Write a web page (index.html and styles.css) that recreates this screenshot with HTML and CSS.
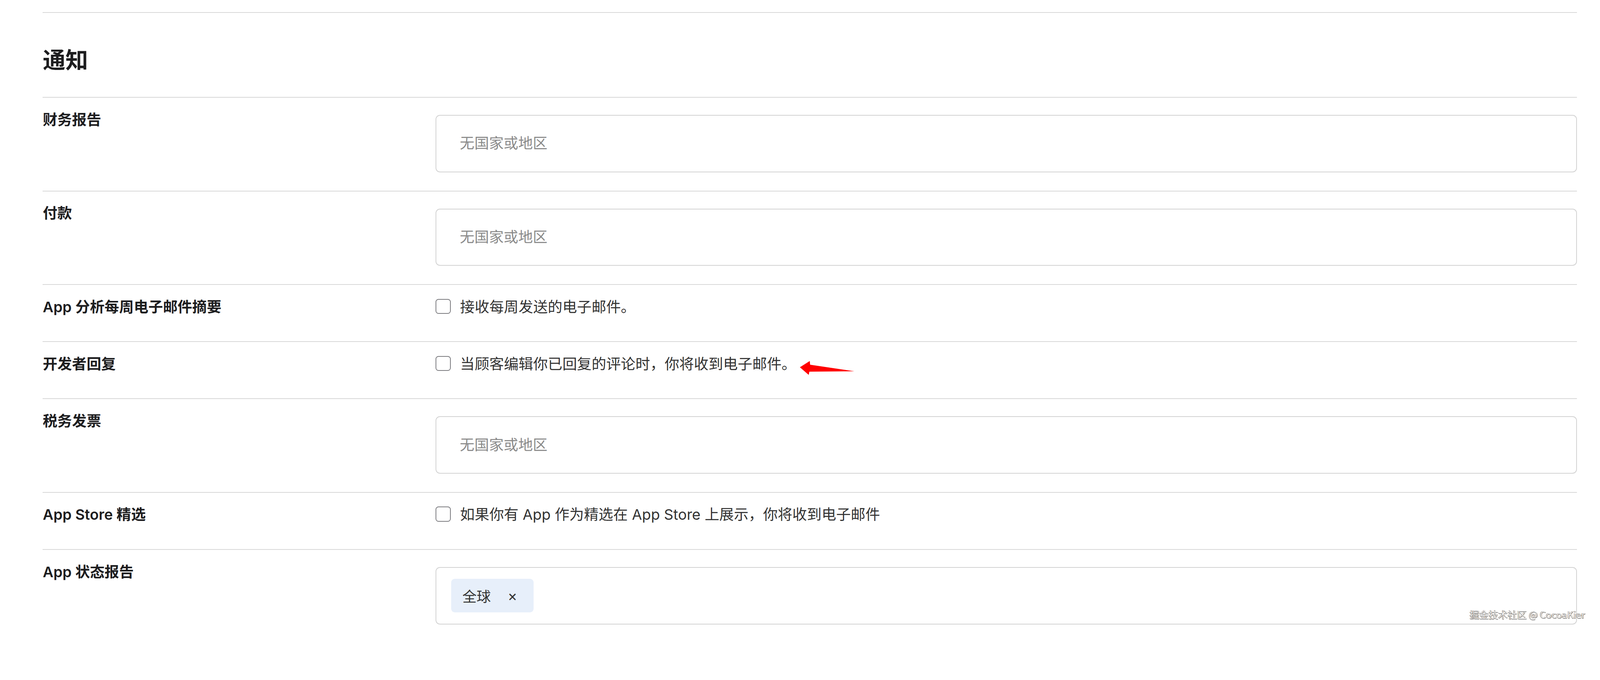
FILE: index.html
```html
<!DOCTYPE html>
<html lang="zh-CN">
<head>
<meta charset="utf-8">
<title>通知</title>
<link rel="stylesheet" href="styles.css">
</head>
<body>
<div class="page">
  <section class="notify">
    <h2 class="notify-title">通知</h2>

    <div class="row">
      <div class="row-label">财务报告</div>
      <div class="row-field">
        <div class="select-box"><span class="placeholder">无国家或地区</span></div>
      </div>
    </div>

    <div class="row">
      <div class="row-label">付款</div>
      <div class="row-field">
        <div class="select-box"><span class="placeholder">无国家或地区</span></div>
      </div>
    </div>

    <div class="row">
      <div class="row-label">App 分析每周电子邮件摘要</div>
      <div class="row-field check-field">
        <span class="checkbox"></span>
        <span class="check-text">接收每周发送的电子邮件。</span>
      </div>
    </div>

    <div class="row">
      <div class="row-label">开发者回复</div>
      <div class="row-field check-field">
        <span class="checkbox"></span>
        <span class="check-text">当顾客编辑你已回复的评论时，你将收到电子邮件。</span>
        <svg class="annot-arrow" viewBox="0 0 156 44">
          <polygon points="4,20 31,3 32,13 153,31 30,32 28,41" fill="#ff0000"/>
        </svg>
      </div>
    </div>

    <div class="row">
      <div class="row-label">税务发票</div>
      <div class="row-field">
        <div class="select-box"><span class="placeholder">无国家或地区</span></div>
      </div>
    </div>

    <div class="row">
      <div class="row-label">App Store 精选</div>
      <div class="row-field check-field">
        <span class="checkbox"></span>
        <span class="check-text">如果你有 App 作为精选在 App Store 上展示，你将收到电子邮件</span>
      </div>
    </div>

    <div class="row row-last">
      <div class="row-label">App 状态报告</div>
      <div class="row-field">
        <div class="select-box chips-box">
          <span class="chip"><span class="chip-text">全球</span><span class="chip-x">×</span></span>
        </div>
      </div>
    </div>
  </section>
</div>
<div class="watermark">掘金技术社区 @ CocoaKier</div>
</body>
</html>
```

FILE: styles.css
```css
/* 1rem = 10 screenshot pixels, whatever the device scale */
html {
  font-size: calc(100vw / 437.8);
}

html, body {
  margin: 0;
  padding: 0;
  background: #ffffff;
  overflow: hidden;
}

body {
  position: relative;
  height: 174rem;
  font-family: Inter, "Noto Sans CJK SC", "Noto Sans", sans-serif;
  color: #1d1d1f;
}

.page {
  padding: 3.3rem 6.3rem 0 11.7rem;
}

.notify {
  border-top: 0.3rem solid #d8d8d8;
}

.notify-title {
  margin: 0;
  padding: 9.4rem 0 6.4rem;
  font-size: 6.2rem;
  line-height: 7.2rem;
  font-weight: 700;
  color: #1d1d1f;
}

.row {
  display: grid;
  grid-template-columns: 107.5rem 1fr;
  border-top: 0.3rem solid #d8d8d8;
  padding: 3.8rem 0 5rem;
}

.row-last {
  padding-bottom: 2.8rem;
}

.row-label {
  font-size: 4rem;
  line-height: 4.5rem;
  font-weight: 600;
  color: #1d1d1f;
}

.select-box {
  box-sizing: border-box;
  margin-top: 0.9rem;
  height: 15.7rem;
  border: 0.3rem solid #d3d3d3;
  border-radius: 1.2rem;
  display: flex;
  align-items: center;
  padding-left: 6.4rem;
  background: #ffffff;
}

.placeholder {
  font-size: 4rem;
  line-height: 4.5rem;
  color: #8a8a8a;
}

.check-field {
  display: flex;
  align-items: flex-start;
  min-height: 6.6rem;
}

.checkbox {
  box-sizing: border-box;
  flex: none;
  width: 4.1rem;
  height: 4.1rem;
  border: 0.3rem solid #7c7c80;
  border-radius: 0.8rem;
  background: #ffffff;
}

.check-text {
  margin-left: 2.6rem;
  font-size: 4rem;
  line-height: 4.5rem;
  color: #333333;
}

.annot-arrow {
  flex: none;
  width: 15.6rem;
  height: 4.4rem;
  margin-left: 0.6rem;
  margin-top: 1.1rem;
}

.chips-box {
  padding-left: 4rem;
}

.chip {
  box-sizing: border-box;
  height: 9.2rem;
  display: inline-flex;
  align-items: center;
  padding: 0 4.4rem 0 3.1rem;
  background: #e7effa;
  border-radius: 1rem;
  font-size: 3.9rem;
  color: #333333;
}

.chip-x {
  margin-left: 4.6rem;
  font-size: 4rem;
}

.watermark {
  position: absolute;
  top: 166.2rem;
  right: 4.1rem;
  font-family: "Noto Sans CJK SC", "Noto Sans", sans-serif;
  font-size: 2.6rem;
  line-height: 3.6rem;
  color: #f2f2f2;
  text-shadow: -0.1rem 0 0 #555, 0 0.1rem 0 #555, 0.1rem 0.1rem 0.1rem #777;
  white-space: nowrap;
}
```
